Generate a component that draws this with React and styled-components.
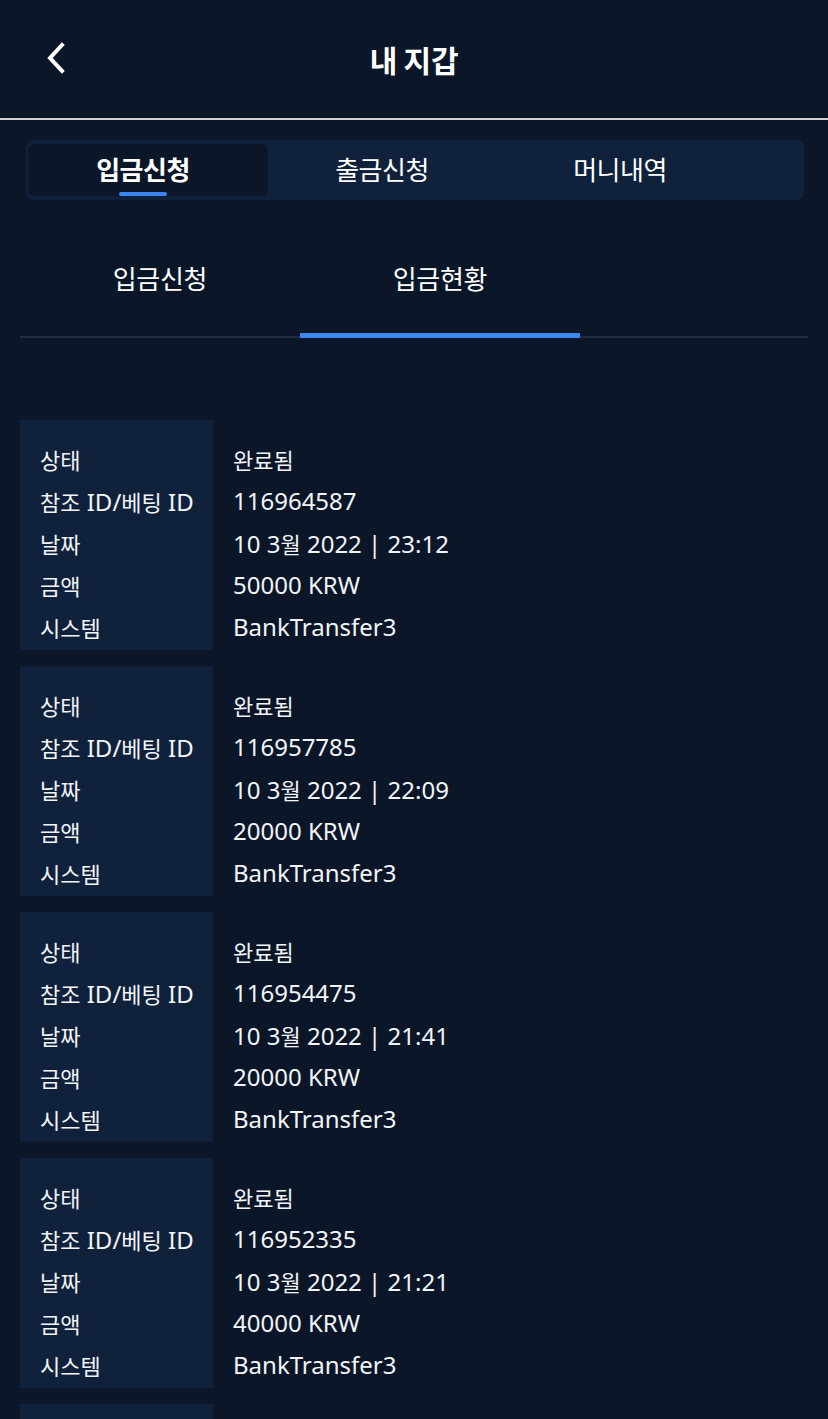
import React, { useState } from 'react';
import styled, { createGlobalStyle } from 'styled-components';

const GlobalStyle = createGlobalStyle`
  html, body {
    margin: 0;
    padding: 0;
    background: #0b1729;
  }
  body {
    font-family: "Noto Sans", "Noto Sans CJK KR", sans-serif;
    color: #ffffff;
  }
`;

const Page = styled.div`
  width: 828px;
  min-height: 1419px;
  background: #0b1729;
  overflow: hidden;
`;

const Header = styled.header`
  position: relative;
  height: 118px;
  display: flex;
  align-items: center;
  justify-content: center;
  border-bottom: 2px solid #d0d0d0;
`;

const BackButton = styled.button`
  position: absolute;
  left: 36px;
  top: 38px;
  width: 40px;
  height: 40px;
  padding: 0;
  border: 0;
  background: none;
  display: flex;
  align-items: center;
  justify-content: center;
  cursor: pointer;
`;

const Title = styled.h1`
  margin: 0;
  font-family: "Noto Sans CJK KR", sans-serif;
  font-size: 30px;
  font-weight: 700;
  letter-spacing: -0.3px;
  color: #ffffff;
`;

const MainTabs = styled.nav`
  margin: 20px 24px 0 26px;
  height: 60px;
  padding: 4px 2px;
  box-sizing: border-box;
  display: grid;
  grid-template-columns: 240px 238px 238px;
  background: #10223b;
  border-radius: 7px;
`;

const MainTab = styled.button`
  position: relative;
  border: 0;
  border-radius: 6px;
  background: ${(p) => (p.$active ? '#0b1729' : 'transparent')};
  color: #ffffff;
  font-family: "Noto Sans CJK KR", sans-serif;
  font-size: 26px;
  font-weight: ${(p) => (p.$active ? 700 : 400)};
  letter-spacing: -0.5px;
  padding: 0 10px 4px 0;
  cursor: pointer;

  &::after {
    content: '';
    display: ${(p) => (p.$active ? 'block' : 'none')};
    position: absolute;
    left: calc(50% - 5px);
    bottom: 0;
    width: 48px;
    height: 4px;
    margin-left: -24px;
    border-radius: 2px;
    background: #3b86f0;
  }
`;

const SubTabs = styled.div`
  margin: 40px 20px 0;
  display: grid;
  grid-template-columns: 280px 280px;
  border-bottom: 2px solid #222f40;
`;

const SubTab = styled.button`
  height: 98px;
  border: 0;
  background: none;
  color: #ffffff;
  font-family: "Noto Sans CJK KR", sans-serif;
  font-size: 26px;
  font-weight: 400;
  letter-spacing: -0.3px;
  padding: 0 0 18px;
  border-bottom: 5px solid ${(p) => (p.$active ? '#3b86f0' : 'transparent')};
  margin-bottom: -2px;
  cursor: pointer;
`;

const List = styled.div`
  margin: 82px 20px 0;
  display: flex;
  flex-direction: column;
  gap: 16px;
`;

const Card = styled.div`
  display: grid;
  grid-template-columns: 193px 1fr;
  height: 230px;
`;

const Labels = styled.div`
  background: #10223b;
  padding: 18px 0 0 20px;
`;

const Values = styled.div`
  padding: 18px 0 0 20px;
`;

const Line = styled.div`
  height: 42px;
  line-height: 42px;
  font-size: 24px;
  color: #f2f4f7;
  white-space: nowrap;
`;

const Ko = styled.span`
  font-family: "Noto Sans CJK KR", sans-serif;
  font-size: 22px;
`;

// hangul runs render a bit smaller than the latin text
const Text = ({ children }) =>
  children.split(/([\uac00-\ud7a3]+)/).map((part, i) =>
    /[\uac00-\ud7a3]/.test(part) ? <Ko key={i}>{part}</Ko> : part
  );

const labels = ['상태', '참조 ID/베팅 ID', '날짜', '금액', '시스템'];

const deposits = [
  { status: '완료됨', id: '116964587', date: '10 3월 2022 | 23:12', amount: '50000 KRW', system: 'BankTransfer3' },
  { status: '완료됨', id: '116957785', date: '10 3월 2022 | 22:09', amount: '20000 KRW', system: 'BankTransfer3' },
  { status: '완료됨', id: '116954475', date: '10 3월 2022 | 21:41', amount: '20000 KRW', system: 'BankTransfer3' },
  { status: '완료됨', id: '116952335', date: '10 3월 2022 | 21:21', amount: '40000 KRW', system: 'BankTransfer3' },
  { status: '완료됨', id: '116950012', date: '10 3월 2022 | 20:58', amount: '30000 KRW', system: 'BankTransfer3' },
];

const App = () => {
  const [mainTab, setMainTab] = useState(0);
  const [subTab, setSubTab] = useState(1);

  return (
    <Page>
      <GlobalStyle />
      <Header>
        <BackButton aria-label="back">
          <svg width="20" height="32" viewBox="0 0 20 32" fill="none">
            <path d="M16 3 L4 16 L16 29" stroke="#fff" strokeWidth="4" strokeLinecap="square" />
          </svg>
        </BackButton>
        <Title>내 지갑</Title>
      </Header>

      <MainTabs>
        {['입금신청', '출금신청', '머니내역'].map((t, i) => (
          <MainTab key={t} $active={mainTab === i} onClick={() => setMainTab(i)}>
            {t}
          </MainTab>
        ))}
      </MainTabs>

      <SubTabs>
        {['입금신청', '입금현황'].map((t, i) => (
          <SubTab key={t} $active={subTab === i} onClick={() => setSubTab(i)}>
            {t}
          </SubTab>
        ))}
      </SubTabs>

      <List>
        {deposits.map((d) => (
          <Card key={d.id}>
            <Labels>
              {labels.map((l) => (
                <Line key={l}><Text>{l}</Text></Line>
              ))}
            </Labels>
            <Values>
              {[d.status, d.id, d.date, d.amount, d.system].map((v, i) => (
                <Line key={i}><Text>{v}</Text></Line>
              ))}
            </Values>
          </Card>
        ))}
      </List>
    </Page>
  );
};

export default App;
